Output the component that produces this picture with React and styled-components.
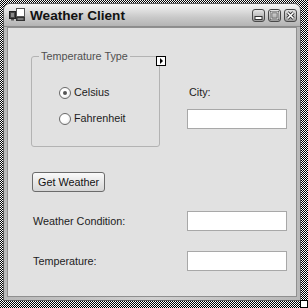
import React from 'react'
import styled, { createGlobalStyle } from 'styled-components'

const GlobalStyle = createGlobalStyle`
  html, body {
    margin: 0;
    padding: 0;
    background: #fff;
  }
  * {
    box-sizing: border-box;
  }
`

const Screen = styled.div`
  position: relative;
  width: 308px;
  height: 308px;
  padding: 3px 7px 7px 3px;
  background-color: #fff;
  background-image: repeating-conic-gradient(#000 0% 25%, #fff 0% 50%);
  background-size: 2px 2px;
  font-family: "Liberation Sans", Arial, sans-serif;
`

const Grip = styled.div`
  position: absolute;
  right: 0;
  bottom: 0;
  width: 8px;
  height: 8px;
  background: #fff;
  border: 1px solid #000;
`

const Window = styled.div`
  display: flex;
  flex-direction: column;
  width: 100%;
  height: 100%;
  border: 1px solid #5e5e5e;
  border-radius: 7px 7px 0 0;
  background: #c4c4c4;
  overflow: hidden;
`

const TitleBar = styled.div`
  display: flex;
  align-items: center;
  height: 23px;
  padding: 0 3px 0 5px;
  background: linear-gradient(#f2f2f2 0%, #e2e2e2 25%, #c9c9c9 60%, #b4b4b4 100%);
  border-bottom: 1px solid #8c8c8c;
`

const Title = styled.div`
  flex: 1;
  margin-left: 4px;
  font-size: 13.6px;
  font-weight: bold;
  color: #111;
  line-height: 16px;
  padding-top: 2px;
`

const Controls = styled.div`
  display: flex;
  gap: 3px;
  padding-top: 1px;
`

const CtlButton = styled.div`
  display: flex;
  align-items: center;
  justify-content: center;
  width: 13px;
  height: 13px;
  border: 1px solid #4a4a4a;
  border-radius: 3px;
  background: linear-gradient(#e4e4e4, #9c9c9c);
`

const Frame = styled.div`
  flex: 1;
  display: flex;
  padding: 0 3px 3px 3px;
  background: linear-gradient(90deg, #b8b8b8, #d0d0d0 50%, #b8b8b8);
`

const Body = styled.div`
  flex: 1;
  display: flex;
  flex-direction: column;
  align-items: flex-start;
  padding: 28px 0 0 23px;
  background: #e1e1e1;
  border: 1px solid #8f8f8f;
  font-size: 10.8px;
  line-height: 13px;
  color: #1c1c1c;
`

const TopRow = styled.div`
  display: flex;
`

const GroupBox = styled.div`
  position: relative;
  width: 129px;
  height: 91px;
  border: 1px solid #b3b3b3;
  border-radius: 3px;
  padding: 29px 0 0 27px;
`

const Legend = styled.span`
  position: absolute;
  top: -7px;
  left: 7px;
  padding: 0 2px;
  background: #e1e1e1;
  color: #505050;
`

const SmartTag = styled.div`
  position: absolute;
  top: -1px;
  right: -7px;
  width: 10px;
  height: 10px;
  border: 1px solid #000;
  background: #fff;
  display: flex;
  align-items: center;
  justify-content: center;
  &::after {
    content: '';
    border-left: 3px solid #000;
    border-top: 3px solid transparent;
    border-bottom: 3px solid transparent;
    margin-left: 1px;
  }
`

const RadioList = styled.div`
  display: flex;
  flex-direction: column;
  gap: 13px;
`

const RadioRow = styled.div`
  display: flex;
  align-items: center;
  gap: 3px;
  height: 13px;
`

const RadioCircle = styled.span`
  display: flex;
  align-items: center;
  justify-content: center;
  width: 12px;
  height: 12px;
  border-radius: 50%;
  border: 1px solid #6a6a6a;
  background: radial-gradient(circle at 40% 40%, #fff 40%, #dedede 100%);
  &::after {
    content: '';
    display: ${p => (p.$checked ? 'block' : 'none')};
    width: 4px;
    height: 4px;
    border-radius: 50%;
    background: #555;
  }
`

const CityColumn = styled.div`
  display: flex;
  flex-direction: column;
  margin-left: 27px;
  padding-top: 30px;
  gap: 10px;
`

const Label = styled.div`
  padding-left: ${p => p.$indent || 0}px;
`

const TextBox = styled.div`
  width: 100px;
  height: 20px;
  background: #fff;
  border: 1px solid #a8a8a8;
`

const Button = styled.div`
  margin: 25px 0 0 1px;
  width: 73px;
  height: 20px;
  display: flex;
  align-items: center;
  justify-content: center;
  border: 1px solid #6b6b6b;
  border-radius: 3px;
  background: linear-gradient(#fafafa, #e8e8e8 50%, #d6d6d6);
  color: #111;
`

const FieldGrid = styled.div`
  display: grid;
  grid-template-columns: 156px 100px;
  row-gap: 20px;
  align-items: center;
  margin-top: 19px;
`

const AppIcon = () => (
  <svg width="17" height="14" viewBox="0 0 17 14">
    <rect x="0.5" y="3.5" width="6" height="7" fill="#444" stroke="#222" />
    <rect x="2" y="5" width="3" height="4" fill="#888" />
    <rect x="7.5" y="0.5" width="8" height="8" fill="#fff" stroke="#555" />
    <rect x="7" y="9" width="9" height="4" fill="#333" />
    <rect x="8.5" y="10" width="6" height="2" fill="#777" />
    <rect x="2" y="11" width="3" height="1.5" fill="#555" />
  </svg>
)

const MinIcon = () => (
  <svg width="9" height="9" viewBox="0 0 9 9">
    <rect x="1" y="5.5" width="7" height="3" fill="#fff" stroke="#333" />
  </svg>
)

const MaxIcon = () => (
  <svg width="9" height="9" viewBox="0 0 9 9">
    <rect x="1" y="1" width="7" height="7" fill="none" stroke="#333" strokeWidth="2.4" />
    <rect x="1" y="1" width="7" height="7" fill="none" stroke="#fff" strokeWidth="1" />
  </svg>
)

const CloseIcon = () => (
  <svg width="9" height="9" viewBox="0 0 9 9">
    <path d="M1.5 1.5 L7.5 7.5 M7.5 1.5 L1.5 7.5" stroke="#333" strokeWidth="3.2" />
    <path d="M1.5 1.5 L7.5 7.5 M7.5 1.5 L1.5 7.5" stroke="#fff" strokeWidth="1.6" />
  </svg>
)

const Radio = ({ checked, children }) => (
  <RadioRow>
    <RadioCircle $checked={checked} />
    <span>{children}</span>
  </RadioRow>
)

export default function App() {
  return (
    <Screen>
      <GlobalStyle />
      <Window>
        <TitleBar>
          <AppIcon />
          <Title>Weather Client</Title>
          <Controls>
            <CtlButton><MinIcon /></CtlButton>
            <CtlButton><MaxIcon /></CtlButton>
            <CtlButton><CloseIcon /></CtlButton>
          </Controls>
        </TitleBar>
        <Frame>
          <Body>
            <TopRow>
              <GroupBox>
                <Legend>Temperature Type</Legend>
                <SmartTag />
                <RadioList>
                  <Radio checked>Celsius</Radio>
                  <Radio>Fahrenheit</Radio>
                </RadioList>
              </GroupBox>
              <CityColumn>
                <Label $indent={2}>City:</Label>
                <TextBox />
              </CityColumn>
            </TopRow>
            <Button>Get Weather</Button>
            <FieldGrid>
              <Label $indent={2}>Weather Condition:</Label>
              <TextBox />
              <Label $indent={2}>Temperature:</Label>
              <TextBox />
            </FieldGrid>
          </Body>
        </Frame>
      </Window>
      <Grip />
    </Screen>
  )
}
